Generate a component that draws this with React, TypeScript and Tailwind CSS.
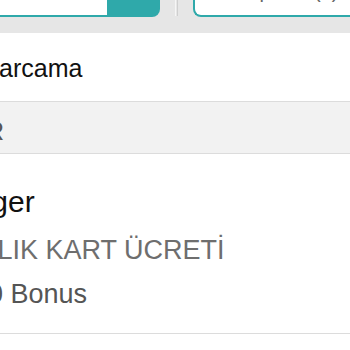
export default function App() {
  const teal = "bg-[#2fa9aa]";
  return (
    <div className="w-[350px] h-[350px] overflow-hidden bg-white font-['Liberation_Sans',Arial,sans-serif]">
      <div className="h-[33px] bg-[#e6e6e6] flex items-start">
        <div className="w-[160px] h-[17px] flex rounded-br-[8px] overflow-hidden">
          <div className="w-[107px] bg-white border-b-2 border-[#2fa9aa]" />
          <div className={`flex-1 ${teal}`} />
        </div>
        <div className="ml-[15px] h-[16px] w-[3px] border-l border-r border-l-[#f6f6f6] border-r-[#cfcfcf]" />
        <div className="ml-[15px] flex-1 h-[17px] bg-white border-b-2 border-l-2 border-[#2fa9aa] rounded-bl-[8px] overflow-hidden">
          <div className="mt-[-21px] pl-[40px] text-[20px] leading-[24px] text-[#666] whitespace-nowrap">Sepetim (0)</div>
        </div>
      </div>
      <div className="h-[68px] pt-[20px]">
        <div className="ml-[-19px] text-[25px] leading-[30px] text-[#111] whitespace-nowrap">Harcama</div>
      </div>
      <div className="h-[53px] bg-[#f2f2f2] border-y border-[#dcdcdc] pt-[14px]">
        <div className="w-[4px] flex justify-end">
          <span className="text-[25px] leading-[30px] text-[#555] whitespace-nowrap">KATEGORİLER</span>
        </div>
      </div>
      <div className="pt-[30px] pb-[23px] border-b border-[#dcdcdc]">
        <div className="ml-[-37px] text-[30px] leading-[36px] text-[#111] whitespace-nowrap">Diger</div>
        <div className="mt-[14px] ml-[-43px] text-[27px] leading-[32px] text-[#6e6e6e] whitespace-nowrap">YILLIK KART ÜCRETİ</div>
        <div className="mt-[12px] ml-[-42px] text-[27px] leading-[32px] text-[#555] whitespace-nowrap">100 Bonus</div>
      </div>
    </div>
  );
}
